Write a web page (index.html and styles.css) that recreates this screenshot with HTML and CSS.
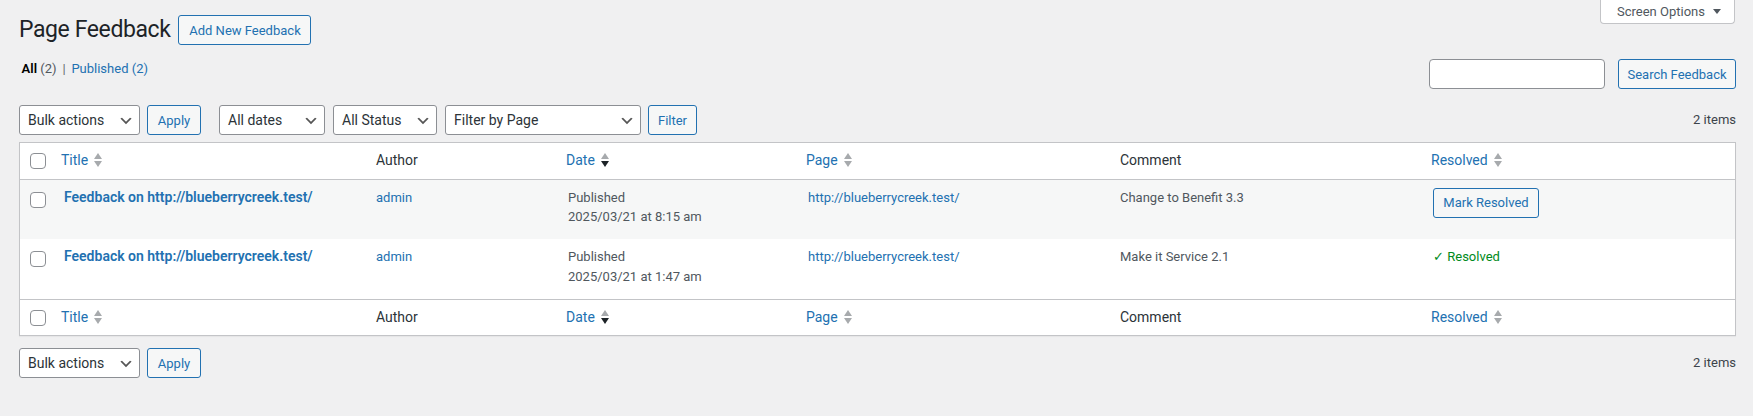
FILE: index.html
```html
<!DOCTYPE html>
<html lang="en">
<head>
<meta charset="utf-8">
<title>Page Feedback</title>
<link rel="stylesheet" href="styles.css">
</head>
<body>
<div class="wrap">
  <div class="page-head">
    <div class="title-group">
      <h1 class="page-title">Page Feedback</h1>
      <a class="btn page-title-action" href="#">Add New Feedback</a>
    </div>
    <button class="screen-tab" type="button">Screen Options
      <svg class="tab-arrow" width="8" height="5" viewBox="0 0 8 5"><polygon points="0,0 8,0 4,5" fill="#50575e"/></svg>
    </button>
  </div>

  <div class="subnav">
    <ul class="subsubsub">
      <li><a class="current" href="#">All <span class="count">(2)</span></a> |&nbsp;</li>
      <li><a href="#">Published <span class="count-link">(2)</span></a></li>
    </ul>
    <div class="search-box">
      <input class="search-input" type="search" aria-label="Search Feedback">
      <button class="btn search-btn" type="button">Search Feedback</button>
    </div>
  </div>

  <div class="tablenav top">
    <div class="select w-bulk">Bulk actions<svg class="chev" width="16" height="16" viewBox="0 0 20 20"><path d="M5 6l5 5 5-5 2 1-7 7-7-7 2-1z" fill="#555"/></svg></div>
    <button class="btn btn-apply" type="button">Apply</button>
    <div class="select w-dates gap-lg">All dates<svg class="chev" width="16" height="16" viewBox="0 0 20 20"><path d="M5 6l5 5 5-5 2 1-7 7-7-7 2-1z" fill="#555"/></svg></div>
    <div class="select w-status gap-sm">All Status<svg class="chev" width="16" height="16" viewBox="0 0 20 20"><path d="M5 6l5 5 5-5 2 1-7 7-7-7 2-1z" fill="#555"/></svg></div>
    <div class="select w-page gap-sm">Filter by Page<svg class="chev" width="16" height="16" viewBox="0 0 20 20"><path d="M5 6l5 5 5-5 2 1-7 7-7-7 2-1z" fill="#555"/></svg></div>
    <button class="btn btn-filter" type="button">Filter</button>
    <span class="displaying-num">2 items</span>
  </div>

  <table class="widefat">
    <colgroup>
      <col class="c-cb"><col class="c-title"><col class="c-author"><col class="c-date"><col class="c-page"><col class="c-comment"><col class="c-resolved">
    </colgroup>
    <thead>
      <tr>
        <th class="check"><input class="cb" type="checkbox" aria-label="Select all"></th>
        <th class="sortable"><a href="#">Title<svg class="sort" width="8" height="14" viewBox="0 0 8 14"><polygon points="0,6 4,0 8,6" fill="#a7aaad"/><polygon points="0,8 8,8 4,14" fill="#a7aaad"/></svg></a></th>
        <th class="plain">Author</th>
        <th class="sortable"><a href="#">Date<svg class="sort" width="8" height="14" viewBox="0 0 8 14"><polygon points="0,6 4,0 8,6" fill="#a7aaad"/><polygon points="0,8 8,8 4,14" fill="#1d2327"/></svg></a></th>
        <th class="sortable"><a href="#">Page<svg class="sort" width="8" height="14" viewBox="0 0 8 14"><polygon points="0,6 4,0 8,6" fill="#a7aaad"/><polygon points="0,8 8,8 4,14" fill="#a7aaad"/></svg></a></th>
        <th class="plain">Comment</th>
        <th class="sortable"><a href="#">Resolved<svg class="sort" width="8" height="14" viewBox="0 0 8 14"><polygon points="0,6 4,0 8,6" fill="#a7aaad"/><polygon points="0,8 8,8 4,14" fill="#a7aaad"/></svg></a></th>
      </tr>
    </thead>
    <tbody>
      <tr class="row">
        <th class="check-row"><input class="cb" type="checkbox" aria-label="Select row"></th>
        <td><a class="row-title" href="#">Feedback on http://blueberrycreek.test/</a></td>
        <td><a href="#">admin</a></td>
        <td>Published<br>2025/03/21 at 8:15 am</td>
        <td><a href="#">http://blueberrycreek.test/</a></td>
        <td>Change to Benefit 3.3</td>
        <td><button class="btn btn-mark" type="button">Mark Resolved</button></td>
      </tr>
      <tr class="row">
        <th class="check-row"><input class="cb" type="checkbox" aria-label="Select row"></th>
        <td><a class="row-title" href="#">Feedback on http://blueberrycreek.test/</a></td>
        <td><a href="#">admin</a></td>
        <td>Published<br>2025/03/21 at 1:47 am</td>
        <td><a href="#">http://blueberrycreek.test/</a></td>
        <td>Make it Service 2.1</td>
        <td><span class="resolved">✓ Resolved</span></td>
      </tr>
    </tbody>
    <tfoot>
      <tr>
        <th class="check"><input class="cb" type="checkbox" aria-label="Select all"></th>
        <th class="sortable"><a href="#">Title<svg class="sort" width="8" height="14" viewBox="0 0 8 14"><polygon points="0,6 4,0 8,6" fill="#a7aaad"/><polygon points="0,8 8,8 4,14" fill="#a7aaad"/></svg></a></th>
        <th class="plain">Author</th>
        <th class="sortable"><a href="#">Date<svg class="sort" width="8" height="14" viewBox="0 0 8 14"><polygon points="0,6 4,0 8,6" fill="#a7aaad"/><polygon points="0,8 8,8 4,14" fill="#1d2327"/></svg></a></th>
        <th class="sortable"><a href="#">Page<svg class="sort" width="8" height="14" viewBox="0 0 8 14"><polygon points="0,6 4,0 8,6" fill="#a7aaad"/><polygon points="0,8 8,8 4,14" fill="#a7aaad"/></svg></a></th>
        <th class="plain">Comment</th>
        <th class="sortable"><a href="#">Resolved<svg class="sort" width="8" height="14" viewBox="0 0 8 14"><polygon points="0,6 4,0 8,6" fill="#a7aaad"/><polygon points="0,8 8,8 4,14" fill="#a7aaad"/></svg></a></th>
      </tr>
    </tfoot>
  </table>

  <div class="tablenav bottom">
    <div class="select w-bulk">Bulk actions<svg class="chev" width="16" height="16" viewBox="0 0 20 20"><path d="M5 6l5 5 5-5 2 1-7 7-7-7 2-1z" fill="#555"/></svg></div>
    <button class="btn btn-apply" type="button">Apply</button>
    <span class="displaying-num">2 items</span>
  </div>
</div>
</body>
</html>
```

FILE: styles.css
```css
* { box-sizing: border-box; }

body {
  margin: 0;
  background: #f0f0f1;
  color: #3c434a;
  font-family: Roboto, "Segoe UI", "Noto Sans", sans-serif;
  font-size: 13px;
  line-height: 1.4em;
}

a { color: #2271b1; text-decoration: none; }

.wrap { padding: 0 17px 0 19px; }

/* header */
.page-head {
  display: flex;
  justify-content: space-between;
  align-items: flex-start;
}
.title-group {
  display: flex;
  align-items: center;
  margin-top: 15px;
}
.page-title {
  margin: 0;
  font-size: 23px;
  font-weight: 400;
  line-height: 30px;
  letter-spacing: -0.4px;
  color: #1d2327;
}

.btn {
  display: inline-flex;
  align-items: center;
  justify-content: center;
  height: 30px;
  padding: 0 10px;
  border: 1px solid #2271b1;
  border-radius: 3px;
  background: #f6f7f7;
  color: #2271b1;
  font-family: inherit;
  font-size: 13px;
  line-height: 1;
  white-space: nowrap;
  cursor: pointer;
}
.page-title-action { width: 133px; margin-left: 8px; }

.screen-tab {
  display: flex;
  align-items: center;
  gap: 8px;
  width: 135px;
  height: 24px;
  padding: 0 0 0 16px;
  background: #fff;
  border: 1px solid #c3c4c7;
  border-top: none;
  border-radius: 0 0 4px 4px;
  color: #50575e;
  font-family: inherit;
  font-size: 13px;
  margin-right: 1px;
}

/* views + search */
.subnav {
  display: flex;
  justify-content: space-between;
  align-items: flex-start;
}
.subsubsub {
  display: flex;
  margin: 11px 0 0;
  padding: 0;
  list-style: none;
  font-size: 13px;
  line-height: 26px;
  color: #646970;
}
.subsubsub a { padding: 0 0.2em; }
.subsubsub .current { color: #000; font-weight: 600; }
.subsubsub .count { color: #50575e; font-weight: 400; }

.search-box {
  display: flex;
  gap: 13px;
  margin-top: 14px;
}
.search-input {
  width: 176px;
  height: 30px;
  margin: 0;
  border: 1px solid #8c8f94;
  border-radius: 4px;
  background: #fff;
}
.search-btn { width: 118px; }

/* tablenav */
.tablenav {
  display: flex;
  align-items: center;
  height: 30px;
}
.tablenav.top { margin: 16px 0 7px; }
.tablenav.bottom { margin: 12px 0 0; }

.select {
  display: flex;
  align-items: center;
  justify-content: space-between;
  height: 30px;
  padding: 0 5px 0 8px;
  border: 1px solid #8c8f94;
  border-radius: 3px;
  background: #fff;
  color: #2c3338;
  font-size: 14px;
}
.chev { flex: none; margin-top: 2px; }
.w-bulk { width: 121px; }
.w-dates { width: 106px; }
.w-status { width: 104px; }
.w-page { width: 196px; }
.gap-lg { margin-left: 18px; }
.gap-sm { margin-left: 8px; }
.btn-apply { width: 54px; margin-left: 7px; }
.btn-filter { width: 49px; margin-left: 7px; }

.displaying-num {
  margin-left: auto;
  color: #3c434a;
  font-size: 13px;
}

/* table */
.widefat {
  width: 100%;
  table-layout: fixed;
  border: 1px solid #c3c4c7;
  border-spacing: 0;
  border-collapse: separate;
  background: #fff;
  box-shadow: 0 1px 1px rgba(0, 0, 0, 0.04);
}
.c-cb { width: 33px; }
.c-title { width: 313px; }
.c-author { width: 192px; }
.c-date { width: 240px; }
.c-page { width: 312px; }
.c-comment { width: 313px; }
.c-resolved { width: 312px; }

.widefat thead th { border-bottom: 1px solid #c3c4c7; }
.widefat tfoot th { border-top: 1px solid #c3c4c7; }

.widefat thead th,
.widefat tfoot th {
  text-align: left;
  font-weight: 400;
  font-size: 14px;
  line-height: 19.6px;
  color: #2c3338;
  vertical-align: top;
}
th.plain { padding: 8px 10px; }
th.sortable { padding: 8px; }
th.sortable a {
  display: inline-flex;
  align-items: center;
  gap: 6px;
}
.sort { flex: none; margin-top: -1px; }
th.check { padding: 10px 0 0 10px; }

.cb {
  appearance: none;
  -webkit-appearance: none;
  display: block;
  width: 16px;
  height: 16px;
  margin: 0;
  border: 1px solid #8c8f94;
  border-radius: 4px;
  background: #fff;
}

.row:nth-child(odd) { background: #f6f7f7; }
.row td,
.row th {
  height: 59.5px;
  vertical-align: top;
  font-weight: 400;
  text-align: left;
}
.row td {
  padding: 8px 10px;
  font-size: 13px;
  line-height: 19.5px;
  color: #50575e;
}
.row th.check-row { padding: 12px 0 0 10px; }

.row-title {
  font-size: 14px;
  font-weight: 600;
  padding-left: 1px;
}

.btn-mark { width: 106px; }

.resolved { color: #008a20; }
```
